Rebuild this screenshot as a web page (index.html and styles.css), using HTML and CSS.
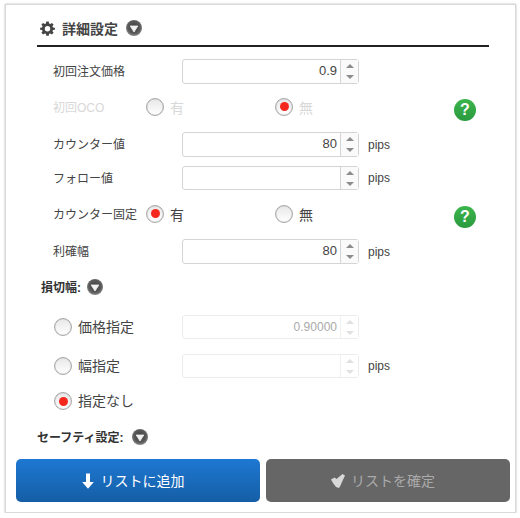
FILE: index.html
```html
<!DOCTYPE html>
<html lang="ja">
<head>
    <meta charset="UTF-8">
    <title>詳細設定</title>
    <link rel="stylesheet" href="styles.css">
</head>
<body>
    <svg class="defs" width="0" height="0">
        <defs>
            <radialGradient id="ball" cx="0.5" cy="0.45" r="0.55">
                <stop offset="0" stop-color="#3f3f3f"/>
                <stop offset="0.7" stop-color="#5a5a5a"/>
                <stop offset="1" stop-color="#8c8c8c"/>
            </radialGradient>
            <symbol id="toggle" viewBox="0 0 16 16">
                <circle cx="8" cy="8" r="8" fill="url(#ball)"/>
                <path d="M4.2 6 H11.8 L8 12 Z" fill="#f2f2f2" stroke="#f2f2f2" stroke-width="0.8" stroke-linejoin="round"/>
            </symbol>
        </defs>
    </svg>

    <div class="panel">
        <!-- Heading -->
        <h2 class="heading">
            <svg class="gear" viewBox="0 0 16 16">
                <path fill="#444" fill-rule="evenodd" d="M6.7 0.6 H9.3 L9.7 2.7 L10.9 3.2 L12.7 2 L14.5 3.8 L13.3 5.6 L13.8 6.8 L15.9 7.2 V9.2 L13.8 9.6 L13.3 10.8 L14.5 12.6 L12.7 14.4 L10.9 13.2 L9.7 13.7 L9.3 15.6 H6.7 L6.3 13.7 L5.1 13.2 L3.3 14.4 L1.5 12.6 L2.7 10.8 L2.2 9.6 L0.1 9.2 V7.2 L2.2 6.8 L2.7 5.6 L1.5 3.8 L3.3 2 L5.1 3.2 L6.3 2.7 Z M8 5.3 A2.9 2.9 0 1 0 8 11.1 A2.9 2.9 0 1 0 8 5.3 Z"/>
            </svg>
            詳細設定
            <svg class="toggle"><use href="#toggle"/></svg>
        </h2>

        <div class="row row-first">
            <label class="name">初回注文価格</label>
            <div class="num"><span class="val">0.9</span><span class="spin"><i class="up"></i><i class="down"></i></span></div>
        </div>

        <div class="row row-oco off">
            <label class="name">初回OCO</label>
            <span class="choice"><span class="radio"></span>有</span>
            <span class="choice"><span class="radio on"></span>無</span>
            <span class="help">?</span>
        </div>

        <div class="row row-counter">
            <label class="name">カウンター値</label>
            <div class="num"><span class="val">80</span><span class="spin"><i class="up"></i><i class="down"></i></span></div>
            <span class="unit">pips</span>
        </div>

        <div class="row row-follow">
            <label class="name">フォロー値</label>
            <div class="num"><span class="val"></span><span class="spin"><i class="up"></i><i class="down"></i></span></div>
            <span class="unit">pips</span>
        </div>

        <div class="row row-fix">
            <label class="name">カウンター固定</label>
            <span class="choice"><span class="radio on"></span>有</span>
            <span class="choice"><span class="radio"></span>無</span>
            <span class="help">?</span>
        </div>

        <div class="row row-counter">
            <label class="name">利確幅</label>
            <div class="num"><span class="val">80</span><span class="spin"><i class="up"></i><i class="down"></i></span></div>
            <span class="unit">pips</span>
        </div>

        <!-- Stop loss -->
        <div class="sub sub-stop"><span class="sub-text">損切幅:</span> <svg class="toggle"><use href="#toggle"/></svg></div>

        <div class="row row-price">
            <span class="pick"><span class="radio"></span><span class="pick-text">価格指定</span></span>
            <div class="num dim"><span class="val">0.90000</span><span class="spin"><i class="up"></i><i class="down"></i></span></div>
        </div>

        <div class="row row-width">
            <span class="pick"><span class="radio"></span><span class="pick-text">幅指定</span></span>
            <div class="num dim"><span class="val"></span><span class="spin"><i class="up"></i><i class="down"></i></span></div>
            <span class="unit">pips</span>
        </div>

        <div class="row row-none">
            <span class="pick"><span class="radio on"></span><span class="pick-text">指定なし</span></span>
        </div>

        <div class="sub sub-safety"><span class="sub-text">セーフティ設定:</span> <svg class="toggle"><use href="#toggle"/></svg></div>

        <!-- Buttons -->
        <div class="actions">
            <button class="btn btn-add">
                <svg class="btn-icon" viewBox="0 0 12 16"><path fill="#fff" d="M4 0.5 H8 V9 H11.8 L6 15.8 L0.2 9 H4 Z"/></svg>
                リストに追加
            </button>
            <button class="btn btn-ok">
                <svg class="btn-icon icon-check" viewBox="0 0 14 14"><path fill="#d8d8d8" d="M0 5.5 L3.5 3.5 L5.5 5 L11.5 0 L14 1.5 L11 8 L9.5 11.5 L8 14 L5 13 L2 9 Z"/></svg>
                リストを確定
            </button>
        </div>
    </div>
</body>
</html>
```
FILE: styles.css
```css
/* Page */
body {
    margin: 0;
    background-color: #fff;
    font-family: "Liberation Sans", "Noto Sans CJK JP", sans-serif;
    color: #444;
}

.defs {
    position: absolute;
}

/* Outer card */
.panel {
    box-sizing: border-box;
    width: 511px;
    height: 509px;
    margin: 4px 0 0 5px;
    border: 1px solid #d9d9d9;
    box-shadow: 0 0 2px #bbb;
    background-color: #fff;
}

/* Heading */
.heading {
    display: flex;
    align-items: center;
    box-sizing: border-box;
    height: 42px;
    margin: 0 26px 0 31px;
    padding: 6px 0 0 3px;
    border-bottom: 2px solid #222;
    font-size: 14px;
    font-weight: bold;
    color: #444;
}

.gear {
    width: 15px;
    height: 15px;
    margin-right: 7px;
}

.heading .toggle {
    margin-left: 8px;
}

.toggle {
    flex: none;
    width: 16px;
    height: 16px;
}

/* Form rows */
.row {
    display: flex;
    align-items: center;
    height: 24px;
    padding-left: 47px;
    font-size: 12px;
}

.row-first { margin-top: 12px; height: 25px; }
.row-oco { margin-top: 11px; }
.row-counter { margin-top: 13px; height: 25px; }
.row-follow { margin-top: 9px; }
.row-fix { margin-top: 12px; }
.row-price { margin-top: 17px; }
.row-width { margin-top: 15px; }
.row-none { margin-top: 11px; }

.name {
    flex: none;
    width: 93px;
    padding-bottom: 2px;
    white-space: nowrap;
}

.row-first .name,
.row-counter .name,
.row-follow .name {
    width: 129px;
}

.off {
    color: #d8d8d8;
}

.choice {
    display: flex;
    align-items: center;
    flex: none;
    width: 129px;
    padding-bottom: 1px;
    font-size: 14px;
}

.pick {
    display: flex;
    align-items: center;
    flex: none;
    box-sizing: border-box;
    width: 129px;
    padding-left: 1px;
    font-size: 14px;
    color: #444;
}

.pick-text {
    padding-bottom: 3px;
}

/* Radio buttons */
.radio {
    position: relative;
    flex: none;
    box-sizing: border-box;
    width: 18px;
    height: 18px;
    margin-right: 6px;
    border: 1px solid #aaa;
    border-radius: 50%;
    background: linear-gradient(#e8e8e8, #fff);
    box-shadow: inset 0 0 1px #999;
}

.radio.on::after {
    content: "";
    position: absolute;
    top: 3.5px;
    left: 3.5px;
    width: 9px;
    height: 9px;
    border-radius: 50%;
    background-color: #f5281e;
}

/* Number inputs */
.num {
    display: flex;
    box-sizing: border-box;
    flex: none;
    width: 177px;
    height: 100%;
    border: 1px solid #d4d4d4;
    border-radius: 3px;
    background-color: #fff;
    font-size: 13px;
    color: #444;
}

.val {
    flex: 1;
    padding-right: 3px;
    line-height: 22px;
    text-align: right;
}

.spin {
    display: flex;
    flex: none;
    flex-direction: column;
    align-items: center;
    justify-content: center;
    gap: 7px;
    width: 17px;
    border-left: 1px solid #d4d4d4;
    background-color: #fafafa;
}

.spin i {
    width: 0;
    height: 0;
    border-left: 4px solid transparent;
    border-right: 4px solid transparent;
}

.spin .up {
    border-bottom: 4px solid #8c8c8c;
}

.spin .down {
    border-top: 4px solid #8c8c8c;
}

.dim {
    border-color: #ececec;
    color: #aaa;
    font-size: 12px;
}

.dim .spin {
    border-left-color: #f0f0f0;
    background-color: #fff;
}

.dim .up {
    border-bottom-color: #e0e0e0;
}

.dim .down {
    border-top-color: #e0e0e0;
}

.unit {
    margin-left: 9px;
    font-size: 12px;
    color: #444;
}

/* Help bubble */
.help {
    flex: none;
    width: 22px;
    height: 22px;
    margin: 6px 0 0 50px;
    border-radius: 50%;
    background: linear-gradient(#3cb54c, #2a9a3e);
    color: #fff;
    font-size: 16px;
    font-weight: bold;
    line-height: 22px;
    text-align: center;
}

/* Section sub heading */
.sub {
    display: flex;
    align-items: center;
    height: 22px;
    font-size: 12px;
    font-weight: bold;
    color: #333;
}

.sub-text {
    padding-bottom: 2px;
}

.sub .toggle {
    margin-left: 6px;
}

.sub-stop {
    margin-top: 12px;
    padding-left: 35px;
}

.sub-safety {
    margin-top: 13px;
    padding-left: 31px;
}

.sub-safety .toggle {
    margin-left: 8px;
}

/* Bottom buttons */
.actions {
    display: flex;
    gap: 6px;
    margin: 11px 0 0 10px;
}

.btn {
    display: flex;
    align-items: center;
    justify-content: center;
    box-sizing: border-box;
    width: 244px;
    height: 43px;
    padding: 0 10px 2px 0;
    border: none;
    border-radius: 5px;
    font-family: inherit;
    font-size: 14px;
}

.btn-add {
    background: linear-gradient(#1e78d2, #155ea6);
    color: #fff;
}

.btn-ok {
    background-color: #666;
    color: #aaa;
}

.btn-icon {
    width: 12px;
    height: 16px;
    margin: 2px 7px 0 0;
}

.icon-check {
    width: 14px;
    height: 14px;
    margin-right: 6px;
}
```
